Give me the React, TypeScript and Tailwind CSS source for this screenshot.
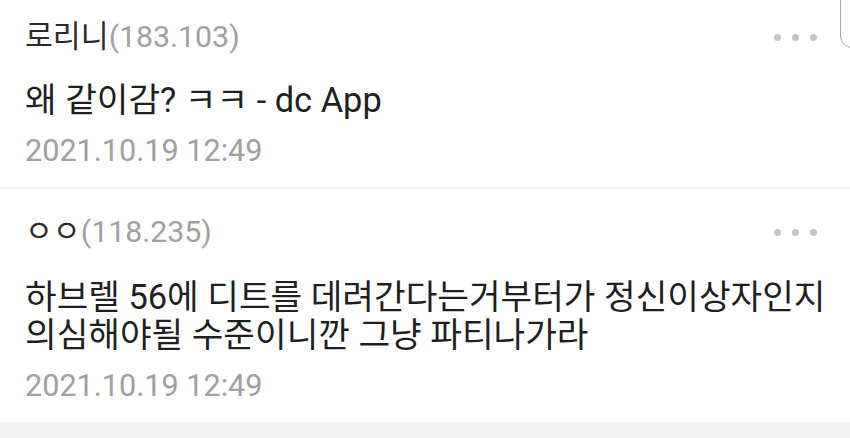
const comments = [
  {
    name: '로리니',
    ip: '183.103',
    lines: ['왜 같이감? ㅋㅋ - dc App'],
    date: '2021.10.19 12:49',
  },
  {
    name: 'ㅇㅇ',
    ip: '118.235',
    lines: ['하브렐 56에 디트를 데려간다는거부터가 정신이상자인지', '의심해야될 수준이니깐 그냥 파티나가라'],
    date: '2021.10.19 12:49',
  },
]

function Dots() {
  return (
    <div className="flex items-center gap-[11px]">
      <span className="w-[7px] h-[7px] rounded-full bg-[#c4c4c4]" />
      <span className="w-[7px] h-[7px] rounded-full bg-[#c4c4c4]" />
      <span className="w-[7px] h-[7px] rounded-full bg-[#c4c4c4]" />
    </div>
  )
}

export default function App() {
  return (
    <div
      className="relative w-[850px] h-[438px] overflow-hidden bg-white"
      style={{ fontFamily: 'Roboto, "Noto Sans CJK KR", sans-serif' }}
    >
      {/* edge of the floating button at the top right */}
      <div className="absolute left-[840px] top-[-12px] w-[40px] h-[60px] rounded-[12px] border border-[#a8a8a8] bg-white" />

      {comments.map((c, i) => (
        <div
          key={i}
          className={
            i === 0
              ? 'flex flex-col pl-[25px] pr-[33px] pt-[18px] pb-[17px] border-b-[2px] border-[#f0f0f0]'
              : 'flex flex-col pl-[25px] pr-[33px] pt-[24px] pb-[17px]'
          }
        >
          <div className="flex items-center justify-between h-[38px]">
            <div className="text-[30.3px] leading-[38px] text-[#2b2b2b]">
              {c.name}
              <span className="text-[#a0a0a0]">({c.ip})</span>
            </div>
            <Dots />
          </div>
          <div className={i === 0 ? 'mt-[25px]' : 'mt-[27px]'}>
            {c.lines.map((l, j) => (
              <div key={j} className="text-[34.4px] leading-[38px] text-[#1f1f1f] whitespace-nowrap">
                {l}
              </div>
            ))}
          </div>
          <div className="mt-[13px] text-[30.6px] leading-[38px] text-[#a0a0a0]">{c.date}</div>
        </div>
      ))}

      <div className="h-[20px] bg-[#f2f2f2]" />
    </div>
  )
}
